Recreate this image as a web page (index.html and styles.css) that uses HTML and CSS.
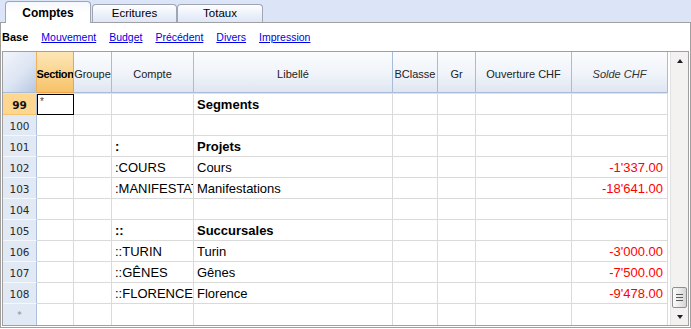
FILE: index.html
```html
<!DOCTYPE html>
<html lang="fr">
<head>
<meta charset="utf-8">
<title>Comptes</title>
<link rel="stylesheet" href="styles.css">
</head>
<body>
<div class="tabbar">
  <div class="tab active">Comptes</div>
  <div class="tab second">Ecritures</div>
  <div class="tab">Totaux</div>
</div>
<div class="panel">
  <div class="views">
    <span class="view-current">Base</span>
    <a class="view-link" href="#">Mouvement</a>
    <a class="view-link" href="#">Budget</a>
    <a class="view-link" href="#">Précédent</a>
    <a class="view-link" href="#">Divers</a>
    <a class="view-link" href="#">Impression</a>
  </div>
  <div class="grid">
    <div class="table">
      <div class="head">
        <div class="hc corner"></div>
        <div class="hc hsel"><span class="ht">Section</span></div>
        <div class="hc"><span class="ht">Groupe</span></div>
        <div class="hc"><span class="ht">Compte</span></div>
        <div class="hc"><span class="ht">Libellé</span></div>
        <div class="hc"><span class="ht">BClasse</span></div>
        <div class="hc"><span class="ht">Gr</span></div>
        <div class="hc"><span class="ht">Ouverture CHF</span></div>
        <div class="hc italic"><span class="ht">Solde CHF</span></div>
      </div>
      <div class="row">
        <div class="num num-sel">99</div>
        <div class="c active"><span class="star">*</span></div>
        <div class="c"></div>
        <div class="c"></div>
        <div class="c b">Segments</div>
        <div class="c"></div><div class="c"></div><div class="c"></div><div class="c amt"></div>
      </div>
      <div class="row">
        <div class="num">100</div>
        <div class="c"></div><div class="c"></div><div class="c"></div><div class="c"></div>
        <div class="c"></div><div class="c"></div><div class="c"></div><div class="c amt"></div>
      </div>
      <div class="row">
        <div class="num">101</div>
        <div class="c"></div><div class="c"></div>
        <div class="c b">:</div>
        <div class="c b">Projets</div>
        <div class="c"></div><div class="c"></div><div class="c"></div><div class="c amt"></div>
      </div>
      <div class="row">
        <div class="num">102</div>
        <div class="c"></div><div class="c"></div>
        <div class="c">:COURS</div>
        <div class="c">Cours</div>
        <div class="c"></div><div class="c"></div><div class="c"></div>
        <div class="c amt">-1'337.00</div>
      </div>
      <div class="row">
        <div class="num">103</div>
        <div class="c"></div><div class="c"></div>
        <div class="c">:MANIFESTATIONS</div>
        <div class="c">Manifestations</div>
        <div class="c"></div><div class="c"></div><div class="c"></div>
        <div class="c amt">-18'641.00</div>
      </div>
      <div class="row">
        <div class="num">104</div>
        <div class="c"></div><div class="c"></div><div class="c"></div><div class="c"></div>
        <div class="c"></div><div class="c"></div><div class="c"></div><div class="c amt"></div>
      </div>
      <div class="row">
        <div class="num">105</div>
        <div class="c"></div><div class="c"></div>
        <div class="c b">::</div>
        <div class="c b">Succursales</div>
        <div class="c"></div><div class="c"></div><div class="c"></div><div class="c amt"></div>
      </div>
      <div class="row">
        <div class="num">106</div>
        <div class="c"></div><div class="c"></div>
        <div class="c">::TURIN</div>
        <div class="c">Turin</div>
        <div class="c"></div><div class="c"></div><div class="c"></div>
        <div class="c amt">-3'000.00</div>
      </div>
      <div class="row">
        <div class="num">107</div>
        <div class="c"></div><div class="c"></div>
        <div class="c">::GÊNES</div>
        <div class="c">Gênes</div>
        <div class="c"></div><div class="c"></div><div class="c"></div>
        <div class="c amt">-7'500.00</div>
      </div>
      <div class="row">
        <div class="num">108</div>
        <div class="c"></div><div class="c"></div>
        <div class="c">::FLORENCE</div>
        <div class="c">Florence</div>
        <div class="c"></div><div class="c"></div><div class="c"></div>
        <div class="c amt">-9'478.00</div>
      </div>
      <div class="row last">
        <div class="num num-new">*</div>
        <div class="c"></div><div class="c"></div><div class="c"></div><div class="c"></div>
        <div class="c"></div><div class="c"></div><div class="c"></div><div class="c amt"></div>
      </div>
    </div>
    <div class="vscroll">
      <div class="sbtn"><span class="arrow-up"></span></div>
      <div class="track"><div class="thumb"><span class="grip"></span></div></div>
      <div class="sbtn"><span class="arrow-down"></span></div>
    </div>
  </div>
</div>
</body>
</html>
```
FILE: styles.css
```css
html, body {
  margin: 0;
  padding: 0;
  background: #ffffff;
  font-family: "Liberation Sans", Arial, sans-serif;
  color: #000;
}

.tabbar {
  height: 22px;
  box-sizing: border-box;
  background: #dce5f8;
  display: flex;
  align-items: flex-end;
  padding-left: 5px;
}

.tab {
  width: 86px;
  height: 18px;
  box-sizing: border-box;
  border: 1px solid #9ea6b6;
  border-bottom: none;
  border-radius: 4px 4px 0 0;
  background: linear-gradient(#ffffff, #f1f4fc 40%, #dfe6f8);
  font-size: 11.5px;
  line-height: 13px;
  padding-top: 2px;
  text-align: center;
}

.tab.second {
  width: 85px;
  margin-left: 1px;
}

.tab.active {
  height: 22px;
  margin-bottom: -1px;
  padding-top: 5px;
  font-weight: bold;
  font-size: 12px;
  background: linear-gradient(#f4f7fc, #ffffff 50%);
  position: relative;
  z-index: 1;
}

.panel {
  border: 1px solid #a0a0a0;
  padding: 0 1px 1px 1px;
}

.views {
  height: 28px;
  display: flex;
  align-items: center;
  gap: 13px;
  font-size: 10.5px;
}

.view-current {
  font-weight: bold;
  font-size: 11px;
}

.view-link {
  color: #0000e6;
  text-decoration: underline;
}

.grid {
  border: 1px solid #a0a0a0;
  display: flex;
}

.table {
  width: 665px;
}

.head, .row {
  display: grid;
  grid-template-columns: 34px 37px 38px 82px 199px 45px 38px 96px 96px;
}

.head {
  height: 42px;
  border-bottom: 1px solid #e2e2e2;
  box-sizing: border-box;
}

.hc {
  box-sizing: border-box;
  height: 41px;
  border-right: 1px solid #a9bcd5;
  border-bottom: 1px solid #a9bcd5;
  background: linear-gradient(#fbfcfe, #f0f3f9 55%, #dfe6f2);
  display: flex;
  align-items: center;
  justify-content: center;
  overflow: hidden;
  white-space: nowrap;
  font-size: 11px;
  color: #222;
  padding-top: 4px;
}

.ht {
  flex-shrink: 0;
}

.hc.corner {
  background: linear-gradient(135deg, #f1f5fc 0%, #dde5f3 55%, #b7c7e1 100%);
  border-right-color: #eeb260;
}

.hc.hsel {
  background: linear-gradient(#fde6b6, #fad592 50%, #f6c266);
  border-right-color: #eba44a;
  border-bottom-color: #eba44a;
  font-weight: bold;
  color: #000;
  letter-spacing: -0.4px;
}

.hc.italic {
  font-style: italic;
  color: #333;
}

.row {
  height: 21px;
}

.c, .num {
  box-sizing: border-box;
  height: 21px;
  border-right: 1px solid #dadada;
  border-bottom: 1px solid #dadada;
  overflow: hidden;
  white-space: nowrap;
  font-size: 13px;
  line-height: 20px;
  padding: 1px 3px 0 3px;
}

.row.last .c, .row.last .num {
  border-bottom: none;
}

.c.b {
  font-weight: bold;
}

.c.amt {
  text-align: right;
  padding-right: 4px;
  color: #ff0000;
}

.c.active {
  border-right-color: #000;
  border-bottom-color: #000;
  box-shadow: inset 1px 1px 0 #000;
  padding: 2px 0 0 3px;
  line-height: 10px;
}

.star {
  font-size: 10px;
  color: #444;
}

.num {
  background: #e1e9f5;
  border-right-color: #adc0da;
  border-bottom-color: #f4f7fc;
  font-family: "DejaVu Sans", Verdana, sans-serif;
  font-size: 10.5px;
  text-align: center;
  color: #2a2a2a;
  padding: 1px 0 0 0;
}

.num.num-sel {
  background: #fdd690;
  border-bottom-color: #f6c36a;
  font-weight: bold;
  color: #111;
}

.num.num-new {
  color: #8a8a8a;
  font-size: 9px;
}

.vscroll {
  width: 20px;
  box-sizing: border-box;
  padding-left: 2px;
  display: flex;
  flex-direction: column;
  background: #ffffff;
}

.sbtn {
  height: 17px;
  display: flex;
  align-items: center;
  justify-content: center;
  background: #f3f2f1;
  border-left: 1px solid #e2e2e2;
}

.arrow-up {
  width: 0;
  height: 0;
  border-left: 3.5px solid transparent;
  border-right: 3.5px solid transparent;
  border-bottom: 4px solid #222;
}

.arrow-down {
  width: 0;
  height: 0;
  border-left: 3.5px solid transparent;
  border-right: 3.5px solid transparent;
  border-top: 4px solid #222;
}

.track {
  flex: 1;
  display: flex;
  flex-direction: column;
  justify-content: flex-end;
  background: #f3f2f1;
  border-left: 1px solid #e2e2e2;
}

.thumb {
  height: 21px;
  box-sizing: border-box;
  margin: 0 1px 0 1px;
  border: 1px solid #8f8f8f;
  border-radius: 2px;
  background: linear-gradient(90deg, #fbfbfb, #e6e6e6 60%, #d4d4d4);
  display: flex;
  align-items: center;
  justify-content: center;
}

.grip {
  width: 7px;
  height: 7px;
  background: repeating-linear-gradient(#5a5a5a 0 1px, transparent 1px 3px);
}
```
